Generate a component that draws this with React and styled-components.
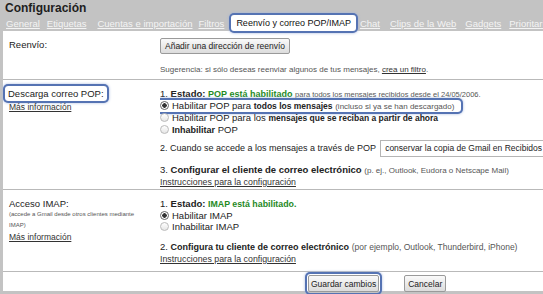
import React from 'react';
import styled, { createGlobalStyle } from 'styled-components';

const GlobalStyle = createGlobalStyle`
  body{
    margin:0;
    font-family:"Liberation Sans", Arial, sans-serif;
    background:#c3c3c3;
  }
`;

const Page = styled.div`
  width:543px;
  height:294px;
  overflow:hidden;
  background:#c3c3c3;
  color:#222;
  font-size:9.5px;
`;

const Header = styled.div`
  height:31px;
  display:flex;
  flex-direction:column;
`;

const Title = styled.div`
  font-size:12px;
  font-weight:bold;
  line-height:14px;
  padding:1px 0 0 5px;
  color:#1e1e1e;
`;

const Tabs = styled.div`
  display:flex;
  align-items:flex-end;
  padding-left:6px;
  margin-top:auto;
  white-space:nowrap;
  font-size:9.5px;
`;

const Tab = styled.a`
  color:#f4f4f4;
  text-decoration:underline;
  margin-right:${p => p.gap || 8}px;
  line-height:15px;
`;

const ActiveTab = styled.span`
  background:#fff;
  color:#111;
  font-size:9px;
  line-height:16px;
  padding:0 5px;
  margin-right:4px;
  border-radius:3px;
  box-shadow:0 0 0 2px #5573b3, 0 0 3px 2px #9fb2dc;
`;

const Panel = styled.div`
  background:#fff;
  margin-left:3px;
  height:260px;
`;

const Section = styled.div`
  display:flex;
  border-bottom:1px solid #b9b9b9;
  padding:${p => p.pad || '7px 0 3px'};
`;

const Label = styled.div`
  width:151px;
  padding-left:6px;
  flex-shrink:0;
  line-height:11px;
`;

const Content = styled.div`
  flex:1;
  line-height:11px;
  white-space:nowrap;
  overflow:hidden;
`;

const Block = styled.div`
  margin-top:${p => p.top || 0}px;
  font-size:${p => p.size || 9.5}px;
`;

const Mark = styled.span`
  display:inline-block;
  border-radius:3px;
  box-shadow:0 0 0 2px #5573b3, 0 0 3px 2px #a9bbe0;
`;

const Small = styled.span`
  font-size:${p => p.size || 8}px;
  color:#555;
`;

const Strong = styled.b`
  font-size:${p => p.size || 8.5}px;
  color:${p => p.green ? '#1f8a1f' : '#222'};
`;

const Tiny = styled.div`
  font-size:6px;
  color:#555;
  line-height:11px;
  width:140px;
  white-space:normal;
`;

const Link = styled.a`
  color:#333;
  text-decoration:underline;
  font-size:${p => p.size || 9.5}px;
`;

const Button = styled.button`
  font-family:inherit;
  font-size:8.5px;
  color:#222;
  height:${p => p.h || 16}px;
  padding:0 ${p => p.px || 4}px;
  border:1px solid #9a9a9a;
  border-radius:2px;
  background:linear-gradient(#fafafa,#dcdcdc);
`;

const Radio = styled.span`
  display:inline-block;
  width:7px;
  height:7px;
  border-radius:50%;
  border:1px solid ${p => p.on ? '#666' : '#bbb'};
  background:${p => p.on ? 'radial-gradient(circle, #333 0 2px, #fff 2.5px)' : 'linear-gradient(#fff,#e6e6e6)'};
  margin-right:3px;
  vertical-align:-1px;
`;

const Option = styled.div`
  line-height:11px;
`;

const Select = styled.span`
  display:inline-block;
  height:17px;
  line-height:15px;
  box-sizing:border-box;
  border:1px solid #b5b5b5;
  padding:0 4px;
  margin-left:4px;
  font-size:8.5px;
  background:#fff;
`;

const Actions = styled.div`
  display:flex;
  align-items:center;
  padding:2px 0 0 304px;
`;

export default function App() {
  return (
    <Page>
      <GlobalStyle />
      <Header>
        <Title>Configuración</Title>
        <Tabs>
          <Tab gap={7}>General</Tab>
          <Tab gap={11}>Etiquetas</Tab>
          <Tab gap={6}>Cuentas e importación</Tab>
          <Tab gap={7}>Filtros</Tab>
          <ActiveTab>Reenvío y correo POP/IMAP</ActiveTab>
          <Tab gap={10}>Chat</Tab>
          <Tab gap={9}>Clips de la Web</Tab>
          <Tab gap={8}>Gadgets</Tab>
          <Tab>Prioritarios</Tab>
        </Tabs>
      </Header>

      <Panel>
        <Section pad="7px 0 4px">
          <Label style={{ paddingTop: 1 }}>Reenvío:</Label>
          <Content>
            <Button>Añadir una dirección de reenvío</Button>
            <Block top={9}>
              <Small>Sugerencia: si sólo deseas reenviar algunos de tus mensajes, <Link size={8}>crea un filtro</Link>.</Small>
            </Block>
          </Content>
        </Section>

        <Section pad="6px 0 1px">
          <Label>
            <Mark style={{ margin: '0 0 0 -4px', padding: '2px 3px' }}>Descarga correo POP:</Mark>
            <div><Link size={8.5}>Más información</Link></div>
          </Label>
          <Content>
            <Block top={2}>1. <b>Estado:</b> <Strong green size={9}>POP está habilitado</Strong> <Small size={7.5}>para todos los mensajes recibidos desde el 24/05/2006.</Small></Block>
            <Option>
              <Mark style={{ margin: '0 0 0 -3px', padding: '0 7px 0 3px' }}>
                <Radio on />Habilitar POP para <Strong>todos los mensajes</Strong> <Small>(incluso si ya se han descargado)</Small>
              </Mark>
            </Option>
            <Option><Radio />Habilitar POP para los <Strong>mensajes que se reciban a partir de ahora</Strong></Option>
            <Option><Radio /><Strong size={9}>Inhabilitar</Strong> POP</Option>
            <Block top={4} size={9}>2. Cuando se accede a los mensajes a través de POP<Select>conservar la copia de Gmail en Recibidos</Select></Block>
            <Block top={7}>3. <b>Configurar el cliente de correo electrónico</b> <Small>(p. ej., Outlook, Eudora o Netscape Mail)</Small></Block>
            <div><Link size={8.8}>Instrucciones para la configuración</Link></div>
          </Content>
        </Section>

        <Section pad="8px 0 6px">
          <Label>
            Acceso IMAP:
            <Tiny>(accede a Gmail desde otros clientes mediante IMAP)</Tiny>
            <Link size={8.5}>Más información</Link>
          </Label>
          <Content>
            <div>1. <b>Estado:</b> <Strong green size={8.8}>IMAP está habilitado.</Strong></div>
            <Option><Radio on />Habilitar IMAP</Option>
            <Option><Radio />Inhabilitar IMAP</Option>
            <Block top={9}>2. <Strong size={9}>Configura tu cliente de correo electrónico</Strong> <Small size={8.5}>(por ejemplo, Outlook, Thunderbird, iPhone)</Small></Block>
            <div><Link size={8.8}>Instrucciones para la configuración</Link></div>
          </Content>
        </Section>

        <Actions>
          <Mark style={{ padding: 1 }}>
            <Button h={17} px={2}>Guardar cambios</Button>
          </Mark>
          <Button h={17} px={3} style={{ marginLeft: 24 }}>Cancelar</Button>
        </Actions>
      </Panel>
    </Page>
  );
}
